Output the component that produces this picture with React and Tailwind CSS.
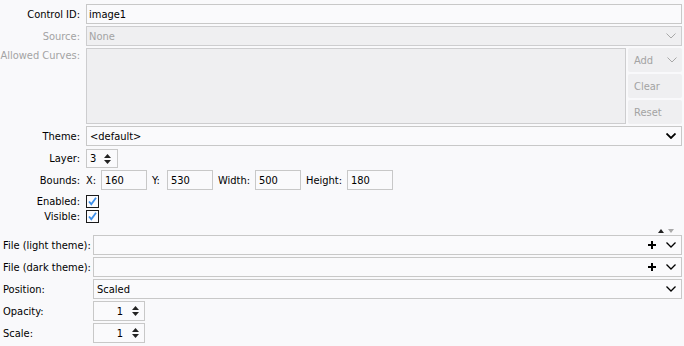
import React from "react";

const FONT = { fontFamily: '"DejaVu Sans Condensed", "Liberation Sans", sans-serif' };

function Chevron({ color = "#000", sw = 1.3 }) {
  return (
    <svg width="10" height="6" viewBox="0 0 10 6" className="shrink-0">
      <polyline points="0.5,0.5 5,5 9.5,0.5" fill="none" stroke={color} strokeWidth={sw} />
    </svg>
  );
}

function Plus() {
  return (
    <svg width="8" height="8" viewBox="0 0 8 8" className="shrink-0">
      <rect x="3" y="0" width="2" height="8" fill="#000" />
      <rect x="0" y="3" width="8" height="2" fill="#000" />
    </svg>
  );
}

function Spin() {
  return (
    <svg width="7" height="12" viewBox="0 0 7 12" className="shrink-0">
      <polygon points="0,5 3.5,1 7,5" fill="#222" />
      <polygon points="0,7 3.5,11 7,7" fill="#222" />
    </svg>
  );
}

function Check() {
  return (
    <div className="w-[13px] h-[13px] border border-[#1a1a1a] bg-[#fbfbfd] flex items-center justify-center">
      <svg width="11" height="11" viewBox="0 0 11 11">
        <polyline points="2,5.5 4.3,8.2 9,1.8" fill="none" stroke="#3b8de8" strokeWidth="1.8" />
      </svg>
    </div>
  );
}

function Label({ children, dim }) {
  return (
    <div className={`w-[80px] shrink-0 text-right whitespace-nowrap ${dim ? "text-[#a3a3a3]" : "text-black"}`}>{children}</div>
  );
}

function BLabel({ children }) {
  return <div className="w-[90px] pl-[3px] shrink-0 whitespace-nowrap">{children}</div>;
}

export default function App() {
  return (
    <div className="w-[684px] h-[346px] bg-[#f9f9fb] text-[11px] leading-[13px] text-black overflow-hidden pt-[4px] pr-[2px]" style={FONT}>
      {/* Control ID */}
      <div className="flex items-center h-[20px]">
        <Label>Control ID:</Label>
        <div className="ml-[6px] flex-1 h-full border border-[#c8c8c8] bg-[#fafafc] flex items-center pl-[2px]">image1</div>
      </div>
      {/* Source */}
      <div className="flex items-center h-[20px] mt-[2px]">
        <Label dim>Source:</Label>
        <div className="ml-[6px] flex-1 h-full border border-[#cdcdcf] bg-[#efeff1] flex items-center pl-[2px] pr-[5px] text-[#a3a3a3]">
          <span className="flex-1">None</span>
          <Chevron color="#a8a8a8" sw={1} />
        </div>
      </div>
      {/* Allowed Curves */}
      <div className="flex h-[76px] mt-[2px]">
        <div className="w-[80px] shrink-0 text-right text-[#a3a3a3] pt-[1px] whitespace-nowrap">Allowed Curves:</div>
        <div className="ml-[6px] flex-1 h-full border border-[#cdcdcf] bg-[#efeff1]" />
        <div className="ml-[2px] w-[54px] flex flex-col gap-[2px] text-[#a3a3a3]">
          <div className="h-[24px] bg-[#efeff1] rounded-[2px] flex items-center pl-[6px] pr-[5px]">
            <span className="flex-1">Add</span>
            <Chevron color="#a8a8a8" sw={1} />
          </div>
          <div className="h-[24px] bg-[#efeff1] rounded-[2px] flex items-center pl-[6px]">Clear</div>
          <div className="h-[24px] bg-[#efeff1] rounded-[2px] flex items-center pl-[6px]">Reset</div>
        </div>
      </div>
      {/* Theme */}
      <div className="flex items-center h-[20px] mt-[2px]">
        <Label>Theme:</Label>
        <div className="ml-[6px] flex-1 h-full border border-[#c8c8c8] bg-[#fafafc] flex items-center pl-[3px] pr-[5px]">
          <span className="flex-1">&lt;default&gt;</span>
          <Chevron sw={1.8} />
        </div>
      </div>
      {/* Layer */}
      <div className="flex items-center h-[19px] mt-[3px]">
        <Label>Layer:</Label>
        <div className="ml-[6px] w-[32px] h-full border border-[#c8c8c8] bg-[#fafafc] flex items-center pl-[3px] pr-[6px] justify-between">
          <span>3</span>
          <Spin />
        </div>
      </div>
      {/* Bounds */}
      <div className="flex items-center h-[20px] mt-[2px]">
        <Label>Bounds:</Label>
        <div className="ml-[6px] w-[15px]">X:</div>
        <div className="w-[46px] h-full border border-[#c8c8c8] bg-[#fafafc] flex items-center pl-[3px]">160</div>
        <div className="ml-[5px] w-[15px]">Y:</div>
        <div className="w-[46px] h-full border border-[#c8c8c8] bg-[#fafafc] flex items-center pl-[3px]">530</div>
        <div className="ml-[5px] w-[37px]">Width:</div>
        <div className="w-[46px] h-full border border-[#c8c8c8] bg-[#fafafc] flex items-center pl-[3px]">500</div>
        <div className="ml-[5px] w-[41px]">Height:</div>
        <div className="w-[46px] h-full border border-[#c8c8c8] bg-[#fafafc] flex items-center pl-[3px]">180</div>
      </div>
      {/* Enabled */}
      <div className="flex items-center h-[13px] mt-[5px]">
        <Label>Enabled:</Label>
        <div className="ml-[6px]"><Check /></div>
      </div>
      {/* Visible */}
      <div className="flex items-center h-[13px] mt-[2px]">
        <Label>Visible:</Label>
        <div className="ml-[6px]"><Check /></div>
      </div>
      {/* small arrows */}
      <div className="flex justify-end items-center h-[4px] mt-[6px] pr-[8px] gap-[4px]">
        <svg width="6" height="4" viewBox="0 0 6 4"><polygon points="0,4 3,0 6,4" fill="#222" /></svg>
        <svg width="6" height="4" viewBox="0 0 6 4"><polygon points="0,0 3,4 6,0" fill="#a8a8a8" /></svg>
      </div>
      {/* File light */}
      <div className="flex items-center h-[20px] mt-[2px]">
        <BLabel>File (light theme):</BLabel>
        <div className="ml-[3px] flex-1 h-full border border-[#c8c8c8] bg-[#fafafc] flex items-center justify-end pr-[5px] gap-[10px]">
          <Plus />
          <Chevron sw={1.3} />
        </div>
      </div>
      {/* File dark */}
      <div className="flex items-center h-[20px] mt-[2px]">
        <BLabel>File (dark theme):</BLabel>
        <div className="ml-[3px] flex-1 h-full border border-[#c8c8c8] bg-[#fafafc] flex items-center justify-end pr-[5px] gap-[10px]">
          <Plus />
          <Chevron sw={1.3} />
        </div>
      </div>
      {/* Position */}
      <div className="flex items-center h-[20px] mt-[2px]">
        <BLabel>Position:</BLabel>
        <div className="ml-[3px] flex-1 h-full border border-[#c8c8c8] bg-[#fafafc] flex items-center pl-[3px] pr-[5px]">
          <span className="flex-1">Scaled</span>
          <Chevron sw={1.3} />
        </div>
      </div>
      {/* Opacity */}
      <div className="flex items-center h-[20px] mt-[2px]">
        <BLabel>Opacity:</BLabel>
        <div className="ml-[3px] w-[52px] h-full border border-[#c8c8c8] bg-[#fafafc] flex items-center justify-end pr-[5px] gap-[9px]">
          <span>1</span>
          <Spin />
        </div>
      </div>
      {/* Scale */}
      <div className="flex items-center h-[20px] mt-[2px]">
        <BLabel>Scale:</BLabel>
        <div className="ml-[3px] w-[52px] h-full border border-[#c8c8c8] bg-[#fafafc] flex items-center justify-end pr-[5px] gap-[9px]">
          <span>1</span>
          <Spin />
        </div>
      </div>
    </div>
  );
}
